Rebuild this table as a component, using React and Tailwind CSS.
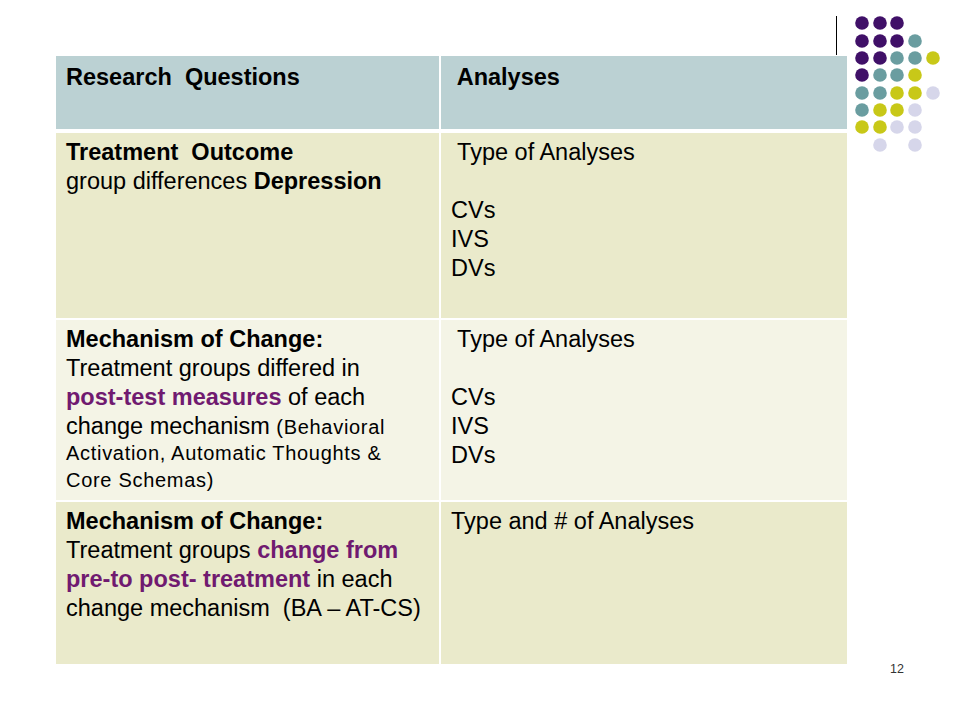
export default function App() {
  const P = "#401068";
  const T = "#6a9da0";
  const Y = "#c8c818";
  const L = "#d6d6ea";
  const cols = [862, 880, 897, 915, 933];
  const rows = [23, 41, 58, 75, 93, 110, 127, 145];
  const grid = [
    [P, P, P, null, null],
    [P, P, P, T, null],
    [P, P, T, T, Y],
    [P, T, T, Y, null],
    [T, T, Y, Y, L],
    [T, Y, Y, L, null],
    [Y, Y, L, L, null],
    [null, L, null, L, null],
  ];
  const dots = [];
  grid.forEach((r, ri) =>
    r.forEach((c, ci) => {
      if (c) dots.push(<circle key={ri + "-" + ci} cx={cols[ci]} cy={rows[ri]} r="6.8" fill={c} />);
    })
  );

  const purple = "text-[#701a70] font-bold";
  const cellL = "pl-[10px] pt-[5px]";
  const cellR = "pl-[10px] pt-[5px]";
  const line = "h-[29px] whitespace-pre";

  return (
    <div
      className="relative w-[960px] h-[720px] bg-white overflow-hidden text-black"
      style={{ fontFamily: '"Liberation Sans", Arial, sans-serif' }}
    >
      <svg className="absolute left-0 top-0 pointer-events-none" width="960" height="160" viewBox="0 0 960 160">
        <line x1="836.5" y1="16" x2="836.5" y2="55" stroke="#000" strokeWidth="1" />
        {dots}
      </svg>

      <div className="pt-[56px] pl-[56px] text-[23.5px] leading-[29px]">
        <div className="w-[791px] flex flex-col">
          {/* header */}
          <div className="grid grid-cols-[383px_406px] gap-x-[2px] h-[73px]">
            <div className={"bg-[#bbd1d3] font-bold pl-[10px] pt-[7px]"}>
              <div className={line}>Research  Questions</div>
            </div>
            <div className={"bg-[#bbd1d3] font-bold pl-[10px] pt-[7px]"}>
              <div className={line}> Analyses</div>
            </div>
          </div>

          {/* row 1 */}
          <div className="grid grid-cols-[383px_406px] gap-x-[2px] h-[185px] mt-[4px]">
            <div className={"bg-[#eaeacb] " + cellL}>
              <div className={line + " font-bold"}>Treatment  Outcome</div>
              <div className={line}>
                group differences <span className="font-bold">Depression</span>
              </div>
            </div>
            <div className={"bg-[#eaeacb] " + cellR}>
              <div className={line}> Type of Analyses</div>
              <div className={line}></div>
              <div className={line}>CVs</div>
              <div className={line}>IVS</div>
              <div className={line}>DVs</div>
            </div>
          </div>

          {/* row 2 */}
          <div className="grid grid-cols-[383px_406px] gap-x-[2px] h-[180px] mt-[2px]">
            <div className={"bg-[#f4f4e6] " + cellL}>
              <div className={line + " font-bold"}>Mechanism of Change:</div>
              <div className={line}>Treatment groups differed in</div>
              <div className={line}>
                <span className={purple}>post-test measures</span> of each
              </div>
              <div className="h-[28px] whitespace-pre">
                change mechanism <span className="text-[20px] tracking-[0.7px]">(Behavioral</span>
              </div>
              <div className="h-[27px] leading-[27px] text-[20px] tracking-[0.7px] whitespace-pre">
                Activation, Automatic Thoughts &amp;
              </div>
              <div className="h-[26px] leading-[26px] text-[20px] tracking-[0.7px] whitespace-pre">
                Core Schemas)
              </div>
            </div>
            <div className={"bg-[#f4f4e6] " + cellR}>
              <div className={line}> Type of Analyses</div>
              <div className={line}></div>
              <div className={line}>CVs</div>
              <div className={line}>IVS</div>
              <div className={line}>DVs</div>
            </div>
          </div>

          {/* row 3 */}
          <div className="grid grid-cols-[383px_406px] gap-x-[2px] h-[162px] mt-[2px]">
            <div className={"bg-[#eaeacb] " + cellL}>
              <div className={line + " font-bold"}>Mechanism of Change:</div>
              <div className={line}>
                Treatment groups <span className={purple}>change from</span>
              </div>
              <div className={line}>
                <span className={purple}>pre-to post- treatment</span> in each
              </div>
              <div className={line}>change mechanism  (BA – AT-CS)</div>
            </div>
            <div className={"bg-[#eaeacb] " + cellR}>
              <div className={line}>Type and # of Analyses</div>
            </div>
          </div>
        </div>
      </div>

      <div className="absolute left-[890px] top-[661px] text-[12.5px] leading-[16px] text-[#333]">12</div>
    </div>
  );
}
